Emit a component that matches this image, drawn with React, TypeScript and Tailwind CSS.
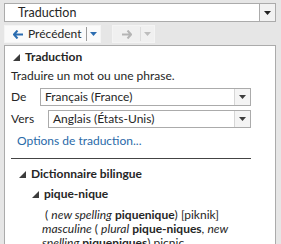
import React from "react";

const Caret = ({ color = "#3c3c3c" }: { color?: string }) => (
  <svg width="7" height="4" viewBox="0 0 7 4">
    <path d="M0 0H7L3.5 4Z" fill={color} />
  </svg>
);

const Tri = () => (
  <svg width="7" height="7" viewBox="0 0 7 7" className="shrink-0">
    <path d="M7 0V7H0Z" fill="#3c3c3c" />
  </svg>
);

const Select = ({ label }: { label: string }) => (
  <div className="flex h-[18px] flex-1 border border-[#ababab] bg-white">
    <div className="flex flex-1 items-center pl-[4px] text-[12px] text-[#262626]">{label}</div>
    <div className="flex w-[16px] items-center justify-center border-l border-[#d6d6d6] bg-[#f4f4f4]">
      <Caret />
    </div>
  </div>
);

export default function App() {
  return (
    <div
      className="flex h-[244px] w-[281px] flex-col overflow-hidden bg-[#e6e6e6] pl-[4px] pr-[5px] pt-[3px] leading-[14px]"
      style={{ fontFamily: 'Lato, "Open Sans", sans-serif' }}
    >
      <div className="flex h-[19px] shrink-0 border border-[#ababab] bg-white">
        <div className="flex flex-1 items-center pl-[13px] text-[12.5px] text-[#262626]">Traduction</div>
        <div className="flex w-[16px] items-center justify-center border-l border-[#ababab] bg-[#f2f2f2]">
          <Caret color="#222" />
        </div>
      </div>
      <div className="mt-[3px] flex h-[18px] shrink-0 items-center gap-[10px]">
        <div className="flex h-full w-[97px] items-center border border-[#f4f4f4] bg-[#fafafa]">
          <div className="flex flex-1 items-center gap-[5px] pl-[8px] text-[12px] text-[#262626]">
            <svg width="10" height="9" viewBox="0 0 10 9">
              <path d="M4.5 0.5L1 4.5L4.5 8.5M1.5 4.5H10" stroke="#2b6cb0" strokeWidth="2" fill="none" />
            </svg>
            Précédent
          </div>
          <div className="h-[14px] w-px bg-[#9a9a9a]" />
          <div className="flex w-[13px] justify-center">
            <Caret color="#2b6cb0" />
          </div>
        </div>
        <div className="ml-[1px] flex h-full w-[43px] items-center border border-[#f4f4f4] bg-[#f0f0f0]">
          <div className="flex flex-1 justify-center">
            <svg width="10" height="9" viewBox="0 0 10 9">
              <path d="M5.5 0.5L9 4.5L5.5 8.5M8.5 4.5H0" stroke="#b5b5b5" strokeWidth="2" fill="none" />
            </svg>
          </div>
          <div className="h-[14px] w-px bg-[#dcdcdc]" />
          <div className="flex w-[13px] justify-center">
            <Caret color="#bdbdbd" />
          </div>
        </div>
      </div>
      <div className="mt-[2px] flex min-h-0 flex-1 flex-col overflow-hidden border border-[#ababab] border-b-0 bg-white pl-[6px] pr-[24px] text-[#262626]">
        <div className="mt-[4px] flex h-[14px] shrink-0 items-center gap-[5px] pl-[2px] text-[12px] font-bold">
          <Tri />
          Traduction
        </div>
        <div className="mt-[5px] h-[14px] shrink-0 text-[12px]">Traduire un mot ou une phrase.</div>
        <div className="mt-[5px] flex shrink-0 items-center gap-[8px] text-[12px]">
          <span className="w-[21px]">De</span>
          <Select label="Français (France)" />
        </div>
        <div className="mt-[4px] flex shrink-0 items-center gap-[8px] text-[12px]">
          <span className="w-[29px]">Vers</span>
          <Select label="Anglais (États-Unis)" />
        </div>
        <div className="mt-[6px] h-[14px] shrink-0 pl-[6px] text-[12px] text-[#2a6aa8]">Options de traduction...</div>
        <div className="mt-[10px] h-px shrink-0 bg-[#444]" />
        <div className="mt-[8px] flex h-[14px] shrink-0 items-center gap-[5px] pl-[8px] text-[12px] font-bold">
          <Tri />
          Dictionnaire bilingue
        </div>
        <div className="mt-[6px] flex h-[14px] shrink-0 items-center gap-[5px] pl-[21px] text-[12px] font-bold">
          <Tri />
          pique-nique
        </div>
        <div className="mt-[7px] shrink-0 pl-[31px] text-[12px] leading-[14px]">
          <div className="pl-[3px]">
            ( <i>new spelling</i> <b>piquenique</b>) [piknik]
          </div>
          <div>
            <i>masculine</i> ( <i>plural</i> <b>pique-niques</b>, <i>new</i>
          </div>
          <div>
            <i>spelling</i> <b>piqueniques</b>) picnic
          </div>
        </div>
      </div>
    </div>
  );
}
